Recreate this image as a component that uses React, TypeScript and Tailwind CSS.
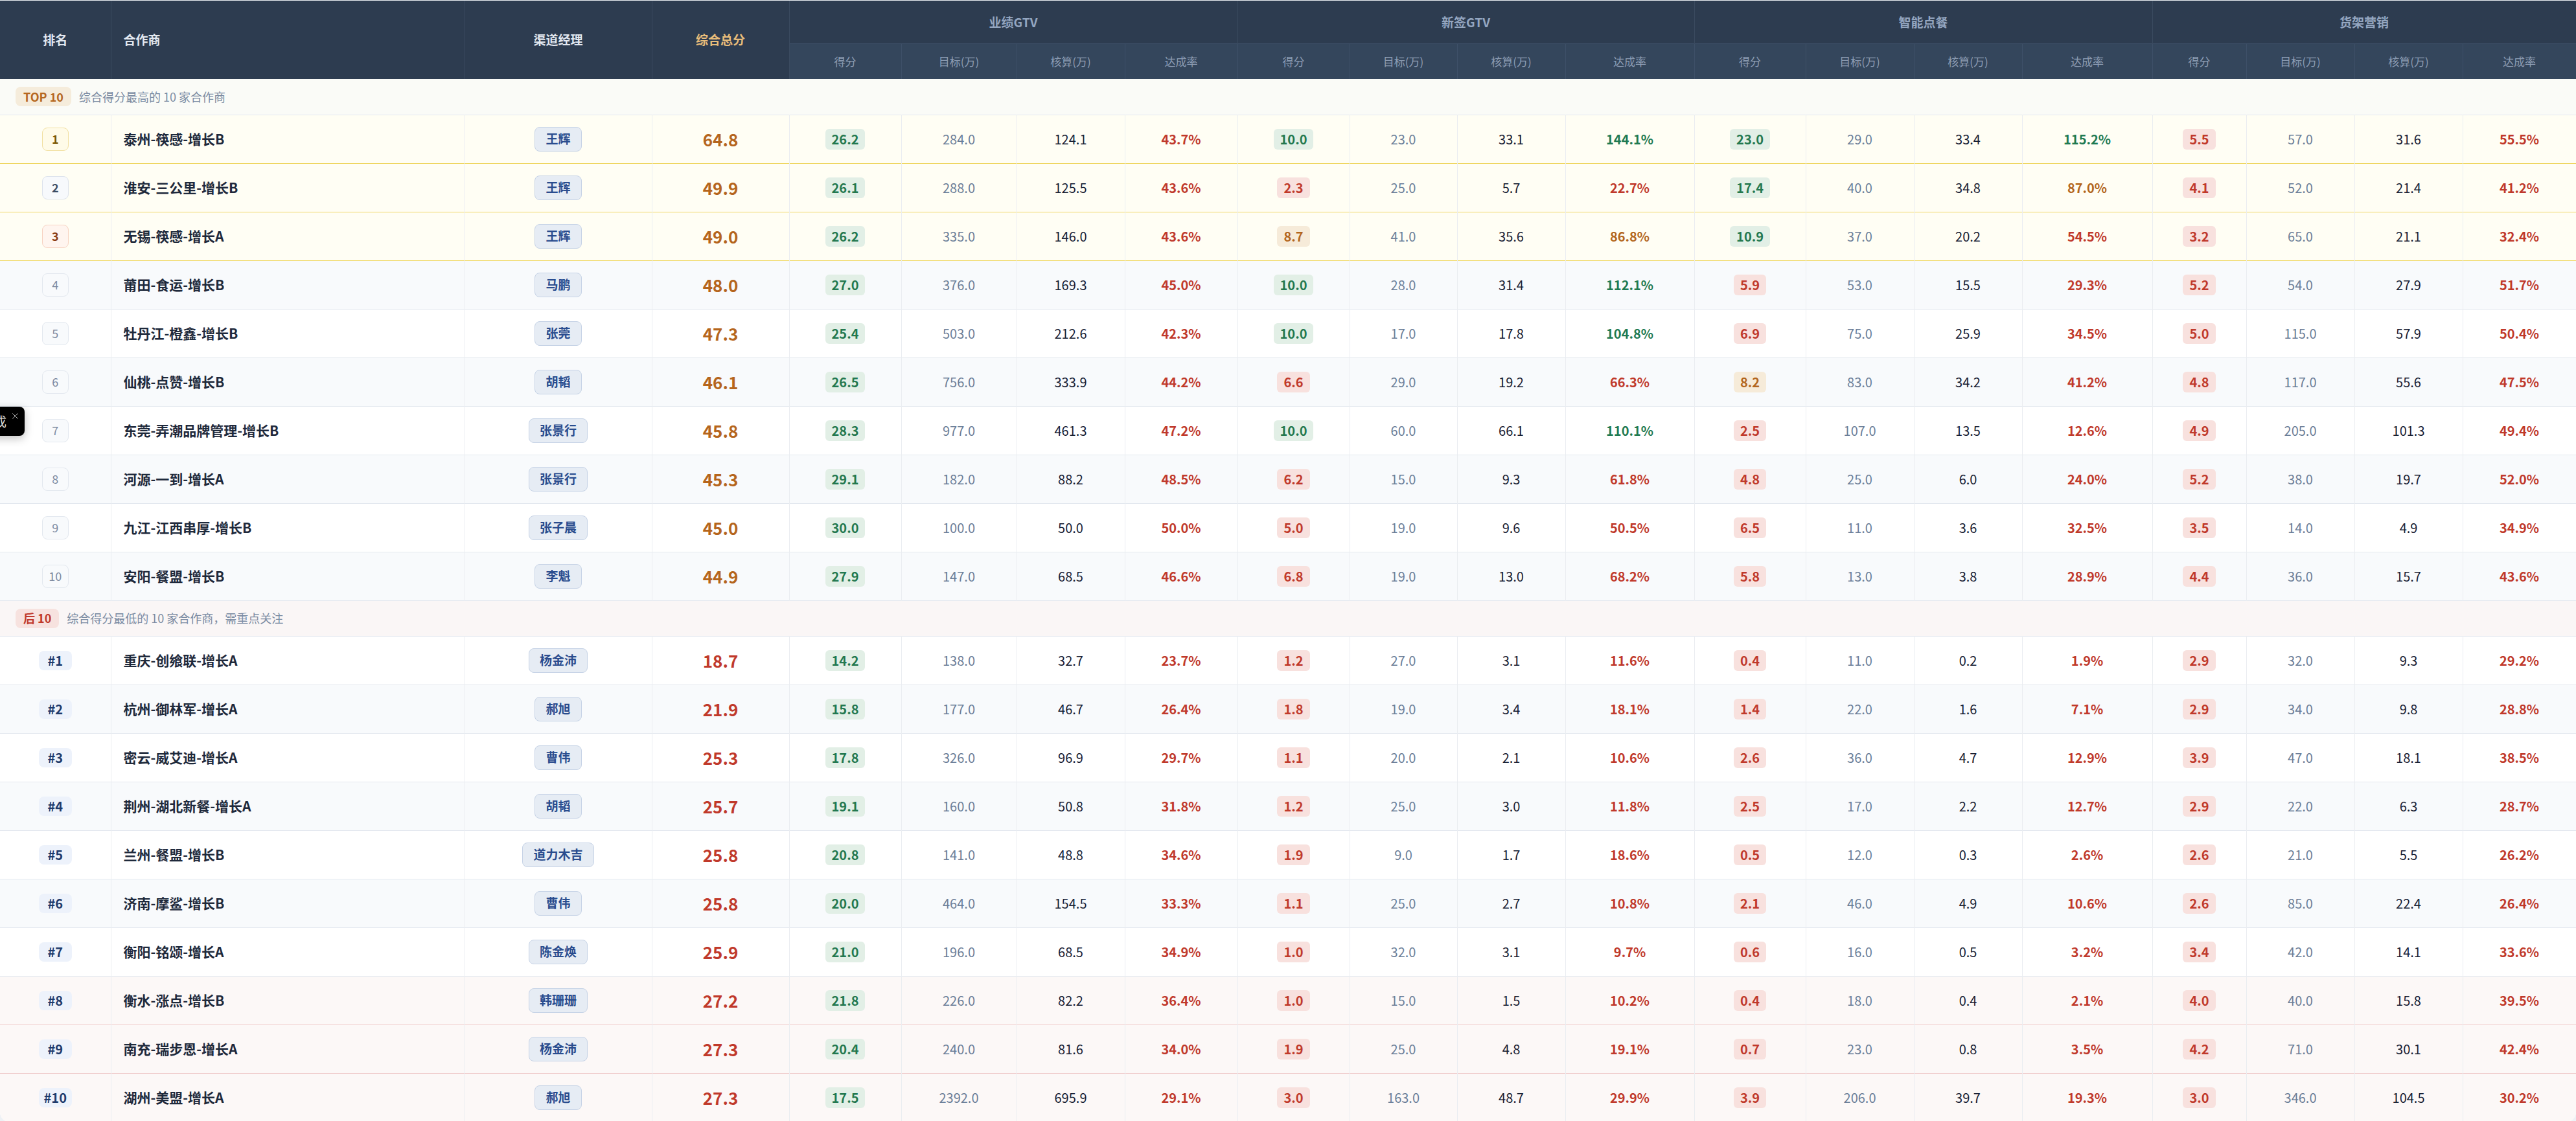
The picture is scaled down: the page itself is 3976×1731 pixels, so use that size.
import { X } from "lucide-react";

type Row = {
  rank: string;
  name: string;
  manager: string;
  total: string;
  groups: [string, string, string, string][];
};

const top10: Row[] = [
  { rank: "1", name: "泰州-筷感-增长B", manager: "王辉", total: "64.8", groups: [["26.2", "284.0", "124.1", "43.7%"], ["10.0", "23.0", "33.1", "144.1%"], ["23.0", "29.0", "33.4", "115.2%"], ["5.5", "57.0", "31.6", "55.5%"]] },
  { rank: "2", name: "淮安-三公里-增长B", manager: "王辉", total: "49.9", groups: [["26.1", "288.0", "125.5", "43.6%"], ["2.3", "25.0", "5.7", "22.7%"], ["17.4", "40.0", "34.8", "87.0%"], ["4.1", "52.0", "21.4", "41.2%"]] },
  { rank: "3", name: "无锡-筷感-增长A", manager: "王辉", total: "49.0", groups: [["26.2", "335.0", "146.0", "43.6%"], ["8.7", "41.0", "35.6", "86.8%"], ["10.9", "37.0", "20.2", "54.5%"], ["3.2", "65.0", "21.1", "32.4%"]] },
  { rank: "4", name: "莆田-食运-增长B", manager: "马鹏", total: "48.0", groups: [["27.0", "376.0", "169.3", "45.0%"], ["10.0", "28.0", "31.4", "112.1%"], ["5.9", "53.0", "15.5", "29.3%"], ["5.2", "54.0", "27.9", "51.7%"]] },
  { rank: "5", name: "牡丹江-橙鑫-增长B", manager: "张莞", total: "47.3", groups: [["25.4", "503.0", "212.6", "42.3%"], ["10.0", "17.0", "17.8", "104.8%"], ["6.9", "75.0", "25.9", "34.5%"], ["5.0", "115.0", "57.9", "50.4%"]] },
  { rank: "6", name: "仙桃-点赞-增长B", manager: "胡韬", total: "46.1", groups: [["26.5", "756.0", "333.9", "44.2%"], ["6.6", "29.0", "19.2", "66.3%"], ["8.2", "83.0", "34.2", "41.2%"], ["4.8", "117.0", "55.6", "47.5%"]] },
  { rank: "7", name: "东莞-弄潮品牌管理-增长B", manager: "张景行", total: "45.8", groups: [["28.3", "977.0", "461.3", "47.2%"], ["10.0", "60.0", "66.1", "110.1%"], ["2.5", "107.0", "13.5", "12.6%"], ["4.9", "205.0", "101.3", "49.4%"]] },
  { rank: "8", name: "河源-一到-增长A", manager: "张景行", total: "45.3", groups: [["29.1", "182.0", "88.2", "48.5%"], ["6.2", "15.0", "9.3", "61.8%"], ["4.8", "25.0", "6.0", "24.0%"], ["5.2", "38.0", "19.7", "52.0%"]] },
  { rank: "9", name: "九江-江西串厚-增长B", manager: "张子晨", total: "45.0", groups: [["30.0", "100.0", "50.0", "50.0%"], ["5.0", "19.0", "9.6", "50.5%"], ["6.5", "11.0", "3.6", "32.5%"], ["3.5", "14.0", "4.9", "34.9%"]] },
  { rank: "10", name: "安阳-餐盟-增长B", manager: "李魁", total: "44.9", groups: [["27.9", "147.0", "68.5", "46.6%"], ["6.8", "19.0", "13.0", "68.2%"], ["5.8", "13.0", "3.8", "28.9%"], ["4.4", "36.0", "15.7", "43.6%"]] },
];

const bottom10: Row[] = [
  { rank: "#1", name: "重庆-创飨联-增长A", manager: "杨金沛", total: "18.7", groups: [["14.2", "138.0", "32.7", "23.7%"], ["1.2", "27.0", "3.1", "11.6%"], ["0.4", "11.0", "0.2", "1.9%"], ["2.9", "32.0", "9.3", "29.2%"]] },
  { rank: "#2", name: "杭州-御林军-增长A", manager: "郝旭", total: "21.9", groups: [["15.8", "177.0", "46.7", "26.4%"], ["1.8", "19.0", "3.4", "18.1%"], ["1.4", "22.0", "1.6", "7.1%"], ["2.9", "34.0", "9.8", "28.8%"]] },
  { rank: "#3", name: "密云-威艾迪-增长A", manager: "曹伟", total: "25.3", groups: [["17.8", "326.0", "96.9", "29.7%"], ["1.1", "20.0", "2.1", "10.6%"], ["2.6", "36.0", "4.7", "12.9%"], ["3.9", "47.0", "18.1", "38.5%"]] },
  { rank: "#4", name: "荆州-湖北新餐-增长A", manager: "胡韬", total: "25.7", groups: [["19.1", "160.0", "50.8", "31.8%"], ["1.2", "25.0", "3.0", "11.8%"], ["2.5", "17.0", "2.2", "12.7%"], ["2.9", "22.0", "6.3", "28.7%"]] },
  { rank: "#5", name: "兰州-餐盟-增长B", manager: "道力木吉", total: "25.8", groups: [["20.8", "141.0", "48.8", "34.6%"], ["1.9", "9.0", "1.7", "18.6%"], ["0.5", "12.0", "0.3", "2.6%"], ["2.6", "21.0", "5.5", "26.2%"]] },
  { rank: "#6", name: "济南-摩鲨-增长B", manager: "曹伟", total: "25.8", groups: [["20.0", "464.0", "154.5", "33.3%"], ["1.1", "25.0", "2.7", "10.8%"], ["2.1", "46.0", "4.9", "10.6%"], ["2.6", "85.0", "22.4", "26.4%"]] },
  { rank: "#7", name: "衡阳-铭颂-增长A", manager: "陈金焕", total: "25.9", groups: [["21.0", "196.0", "68.5", "34.9%"], ["1.0", "32.0", "3.1", "9.7%"], ["0.6", "16.0", "0.5", "3.2%"], ["3.4", "42.0", "14.1", "33.6%"]] },
  { rank: "#8", name: "衡水-涨点-增长B", manager: "韩珊珊", total: "27.2", groups: [["21.8", "226.0", "82.2", "36.4%"], ["1.0", "15.0", "1.5", "10.2%"], ["0.4", "18.0", "0.4", "2.1%"], ["4.0", "40.0", "15.8", "39.5%"]] },
  { rank: "#9", name: "南充-瑞步恩-增长A", manager: "杨金沛", total: "27.3", groups: [["20.4", "240.0", "81.6", "34.0%"], ["1.9", "25.0", "4.8", "19.1%"], ["0.7", "23.0", "0.8", "3.5%"], ["4.2", "71.0", "30.1", "42.4%"]] },
  { rank: "#10", name: "湖州-美盟-增长A", manager: "郝旭", total: "27.3", groups: [["17.5", "2392.0", "695.9", "29.1%"], ["3.0", "163.0", "48.7", "29.9%"], ["3.9", "206.0", "39.7", "19.3%"], ["3.0", "346.0", "104.5", "30.2%"]] },
];

const GROUPS = ["业绩GTV", "新签GTV", "智能点餐", "货架营销"];
const SUBS = ["得分", "目标(万)", "核算(万)", "达成率"];

// chip colour per group: 业绩 always ok, 货架 always low
const chipTone = (g: number, v: number) => {
  if (g === 0) return "green";
  if (g === 3) return "red";
  const hi = g === 1 ? 9.5 : 10;
  if (v >= hi) return "green";
  if (v >= 7.5) return "orange";
  return "red";
};

const chipCls = {
  green: "bg-[#e2efe6] text-[#23784f]",
  orange: "bg-[#f6ebd9] text-[#b3661c]",
  red: "bg-[#f8e1de] text-[#c0392b]",
};

const rateCls = (s: string) => {
  const v = parseFloat(s);
  if (v >= 100) return "text-[#1f7a52]";
  if (v >= 80) return "text-[#b3661c]";
  return "text-[#c0392b]";
};

const RankBadge = ({ rank, bottom }: { rank: string; bottom: boolean }) => {
  if (bottom)
    return (
      <span className="inline-flex h-[30px] min-w-[51px] items-center justify-center rounded-lg bg-[#edf2fb] px-2 text-[20px] font-bold text-[#1e3a6b]">
        {rank}
      </span>
    );
  const n = Number(rank);
  const cls =
    n === 1
      ? "border-[#f2e0a2] bg-[#fffbe8] font-bold text-[#7a5600]"
      : n === 2
        ? "border-[#dde3ec] bg-[#f7f9fc] font-bold text-[#3b4b62]"
        : n === 3
          ? "border-[#f7d3c2] bg-[#fff5ef] font-bold text-[#8a3b12]"
          : "border-[#e3e8ef] bg-[#f8fafc] text-[#7d8aa0]";
  return (
    <span
      className={`inline-flex h-[36px] w-[41px] items-center justify-center rounded-lg border text-[18px] ${cls}`}
    >
      {rank}
    </span>
  );
};

const cell = "border-r border-[#eaedf1] text-center";

const DataRow = ({ r, i, bottom }: { r: Row; i: number; bottom: boolean }) => {
  const n = i + 1;
  let rowCls = i % 2 === 1 ? "bg-[#f8fafc] border-b border-[#e3e8ef]" : "bg-white border-b border-[#e3e8ef]";
  if (!bottom && n <= 3) rowCls = "bg-[#fffef4] border-b border-[#efd65e]";
  if (bottom && n >= 8) rowCls = "bg-[#fcf8f7] border-b border-[#efcaca]";
  return (
    <tr className={`h-[75px] ${rowCls}`}>
      <td className={cell}>
        <RankBadge rank={r.rank} bottom={bottom} />
      </td>
      <td className="border-r border-[#eaedf1] pl-[19px] text-left text-[21px] font-bold text-[#1e293b]">
        {r.name}
      </td>
      <td className={cell}>
        <span className="inline-flex h-[38px] items-center rounded-lg border border-[#c6d3e6] bg-[#e6ecf4] px-[16px] text-[19px] font-bold text-[#2a4c8e]">
          {r.manager}
        </span>
      </td>
      <td
        className={`${cell} text-[26px] font-bold ${bottom ? "text-[#c0392b]" : "text-[#b5651d]"}`}
      >
        {r.total}
      </td>
      {r.groups.map((g, gi) => (
        <GroupCells key={gi} g={g} gi={gi} />
      ))}
    </tr>
  );
};

const GroupCells = ({ g, gi }: { g: [string, string, string, string]; gi: number }) => {
  const tone = chipTone(gi, parseFloat(g[0]));
  return (
    <>
      <td className={cell}>
        <span
          className={`inline-flex h-[32px] items-center rounded-md px-[10px] text-[20px] font-bold ${chipCls[tone]}`}
        >
          {g[0]}
        </span>
      </td>
      <td className={`${cell} text-[20px] text-[#6b7e98]`}>{g[1]}</td>
      <td className={`${cell} text-[20px] text-[#172033]`}>{g[2]}</td>
      <td className={`${cell} text-[20px] font-bold ${rateCls(g[3])}`}>{g[3]}</td>
    </>
  );
};

const SectionRow = ({ bottom }: { bottom: boolean }) => (
  <tr className={`h-[55px] border-b border-[#e3e8ef] ${bottom ? "bg-[#faf6f6]" : "bg-[#fafbf7]"}`}>
    <td colSpan={20} className="pl-[24px] text-left">
      <div className="flex items-center gap-[12px]">
        {bottom ? (
          <span className="inline-flex h-[30px] items-center rounded-lg bg-[#f7e2df] px-[12px] text-[18px] font-bold text-[#c0392b]">
            后 10
          </span>
        ) : (
          <span className="inline-flex h-[30px] items-center rounded-lg bg-[#f5ecdb] px-[12px] text-[18px] font-bold text-[#b5671f]">
            TOP 10
          </span>
        )}
        <span className="text-[18px] text-[#7b8ba2]">
          {bottom ? "综合得分最低的 10 家合作商，需重点关注" : "综合得分最高的 10 家合作商"}
        </span>
      </div>
    </td>
  </tr>
);

export default function App() {
  return (
    <div className="relative min-h-screen bg-[#eef1f5] pt-px font-['Noto_Sans_CJK_SC','Noto_Sans',sans-serif]">
      <div className="overflow-hidden rounded-b-2xl bg-white">
        <table className="w-full table-fixed border-collapse">
          <colgroup>
            <col className="w-[171px]" />
            <col className="w-[546px]" />
            <col className="w-[289px]" />
            <col className="w-[212px]" />
            <col className="w-[173px]" />
            <col className="w-[178px]" />
            <col className="w-[167px]" />
            <col className="w-[174px]" />
            <col className="w-[173px]" />
            <col className="w-[166px]" />
            <col className="w-[167px]" />
            <col className="w-[199px]" />
            <col className="w-[172px]" />
            <col className="w-[167px]" />
            <col className="w-[167px]" />
            <col className="w-[201px]" />
            <col className="w-[145px]" />
            <col className="w-[167px]" />
            <col className="w-[167px]" />
            <col className="w-[175px]" />
          </colgroup>
          <thead>
            <tr className="h-[66px] bg-[#2d3c50]">
              <th rowSpan={2} className="border-r border-[#3a4a5f] text-center text-[19px] font-bold text-[#e2e8f0]">
                排名
              </th>
              <th rowSpan={2} className="border-r border-[#3a4a5f] pl-[19px] text-left text-[19px] font-bold text-[#e2e8f0]">
                合作商
              </th>
              <th rowSpan={2} className="border-r border-[#3a4a5f] text-center text-[19px] font-bold text-[#e2e8f0]">
                渠道经理
              </th>
              <th rowSpan={2} className="border-r border-[#3a4a5f] text-center text-[19px] font-bold text-[#e8bd7a]">
                综合总分
              </th>
              {GROUPS.map((g) => (
                <th
                  key={g}
                  colSpan={4}
                  className="border-r border-[#3a4a5f] text-center text-[19px] font-bold text-[#94a6c0]"
                >
                  {g}
                </th>
              ))}
            </tr>
            <tr className="h-[55px] bg-[#34465c]">
              {GROUPS.flatMap((g) =>
                SUBS.map((s) => (
                  <th
                    key={g + s}
                    className="border-r border-t border-[#3e5068] text-center text-[17px] font-normal text-[#8d9db4]"
                  >
                    {s}
                  </th>
                )),
              )}
            </tr>
          </thead>
          <tbody>
            <SectionRow bottom={false} />
            {top10.map((r, i) => (
              <DataRow key={r.rank} r={r} i={i} bottom={false} />
            ))}
            <SectionRow bottom />
            {bottom10.map((r, i) => (
              <DataRow key={r.rank} r={r} i={i} bottom />
            ))}
          </tbody>
        </table>
      </div>

      {/* toast sticking out of the left edge */}
      <div className="absolute left-[-122px] top-[628px] flex h-[45px] w-[160px] items-center justify-end rounded-lg bg-black pr-[28px] text-[20px] text-[#d9d9d9] shadow-[0_4px_14px_rgba(0,0,0,0.25)]">
        任务已完成
        <X className="absolute right-[7px] top-[7px] h-[15px] w-[15px] text-[#d9d9d9]" strokeWidth={1.5} />
      </div>
    </div>
  );
}
